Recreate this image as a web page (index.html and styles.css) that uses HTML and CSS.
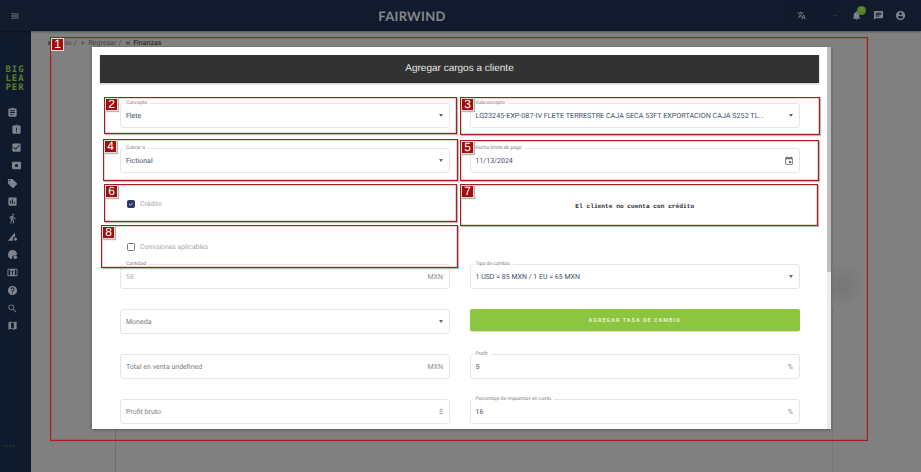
FILE: index.html
```html
<!DOCTYPE html>
<html lang="es">
<head>
<meta charset="utf-8">
<title>Fairwind</title>
<link rel="stylesheet" href="styles.css">
</head>
<body>
<svg class="sprite" aria-hidden="true">
  <symbol id="i-menu" viewBox="0 0 24 24"><path d="M3 18h18v-2H3v2zm0-5h18v-2H3v2zm0-7v2h18V6H3z"/></symbol>
  <symbol id="i-translate" viewBox="0 0 24 24"><path d="M12.87 15.07l-2.54-2.51.03-.03c1.74-1.94 2.98-4.17 3.71-6.53H17V4h-7V2H8v2H1v1.99h11.17C11.5 7.92 10.44 9.75 9 11.35 8.07 10.32 7.3 9.19 6.69 8h-2c.73 1.63 1.73 3.17 2.98 4.56l-5.09 5.02L4 19l5-5 3.11 3.11.76-2.04zM18.5 10h-2L12 22h2l1.12-3h4.75L21 22h2l-4.5-12zm-2.62 7l1.62-4.33L19.12 17h-3.24z"/></symbol>
  <symbol id="i-bell" viewBox="0 0 24 24"><path d="M12 22c1.1 0 2-.9 2-2h-4c0 1.1.89 2 2 2zm6-6v-5c0-3.07-1.64-5.64-4.5-6.32V4c0-.83-.67-1.5-1.5-1.5s-1.5.67-1.5 1.5v.68C7.63 5.36 6 7.92 6 11v5l-2 2v1h16v-1l-2-2z"/></symbol>
  <symbol id="i-chat" viewBox="0 0 24 24"><path d="M20 2H4c-1.1 0-1.99.9-1.99 2L2 22l4-4h14c1.1 0 2-.9 2-2V4c0-1.1-.9-2-2-2zM6 9h12v2H6V9zm8 5H6v-2h8v2zm4-6H6V6h12v2z"/></symbol>
  <symbol id="i-account" viewBox="0 0 24 24"><path d="M12 2C6.48 2 2 6.48 2 12s4.48 10 10 10 10-4.48 10-10S17.52 2 12 2zm0 3c1.66 0 3 1.34 3 3s-1.34 3-3 3-3-1.34-3-3 1.34-3 3-3zm0 14.2c-2.5 0-4.71-1.28-6-3.22.03-1.99 4-3.08 6-3.08 1.99 0 5.97 1.09 6 3.08-1.29 1.94-3.5 3.22-6 3.22z"/></symbol>
  <symbol id="i-event" viewBox="0 0 24 24"><path d="M17 12h-5v5h5v-5zM16 1v2H8V1H6v2H5c-1.11 0-1.99.9-1.99 2L3 19c0 1.1.89 2 2 2h14c1.1 0 2-.9 2-2V5c0-1.1-.9-2-2-2h-1V1h-2zm3 18H5V8h14v11z"/></symbol>
  <symbol id="i-assignment" viewBox="0 0 24 24"><path d="M19 3h-4.18C14.4 1.84 13.3 1 12 1c-1.3 0-2.4.84-2.82 2H5c-1.1 0-2 .9-2 2v14c0 1.1.9 2 2 2h14c1.1 0 2-.9 2-2V5c0-1.1-.9-2-2-2zm-7 0c.55 0 1 .45 1 1s-.45 1-1 1-1-.45-1-1 .45-1 1-1zm2 14H7v-2h7v2zm3-4H7v-2h10v2zm0-4H7V7h10v2z"/></symbol>
  <symbol id="i-late" viewBox="0 0 24 24"><path d="M19 3h-4.18C14.4 1.84 13.3 1 12 1c-1.3 0-2.4.84-2.82 2H5c-1.1 0-2 .9-2 2v14c0 1.1.9 2 2 2h14c1.1 0 2-.9 2-2V5c0-1.1-.9-2-2-2zm-6 15h-2v-2h2v2zm0-4h-2V8h2v6zm-1-9c-.55 0-1-.45-1-1s.45-1 1-1 1 .45 1 1-.45 1-1 1z"/></symbol>
  <symbol id="i-task" viewBox="0 0 24 24"><path d="M19 3H5c-1.11 0-2 .9-2 2v14c0 1.1.89 2 2 2h14c1.11 0 2-.9 2-2V5c0-1.1-.89-2-2-2zm-9 14l-5-5 1.41-1.41L10 14.17l7.59-7.59L19 8l-9 9z"/></symbol>
  <symbol id="i-box" viewBox="0 0 24 24"><path fill-rule="evenodd" d="M20 4H4c-1.1 0-2 .9-2 2v12c0 1.1.9 2 2 2h16c1.1 0 2-.9 2-2V6c0-1.1-.9-2-2-2zM12 15.5a3.5 3.5 0 1 1 0-7 3.5 3.5 0 0 1 0 7z"/></symbol>
  <symbol id="i-tag" viewBox="0 0 24 24"><path d="M21.41 11.58l-9-9C12.05 2.22 11.55 2 11 2H4c-1.1 0-2 .9-2 2v7c0 .55.22 1.05.59 1.42l9 9c.36.36.86.58 1.41.58.55 0 1.05-.22 1.41-.59l7-7c.37-.36.59-.86.59-1.41 0-.55-.23-1.06-.59-1.42zM5.5 7C4.67 7 4 6.33 4 5.5S4.67 4 5.5 4 7 4.67 7 5.5 6.33 7 5.5 7z"/></symbol>
  <symbol id="i-chart" viewBox="0 0 24 24"><path d="M19 3H5c-1.1 0-2 .9-2 2v14c0 1.1.9 2 2 2h14c1.1 0 2-.9 2-2V5c0-1.1-.9-2-2-2zM9 17H7v-7h2v7zm4 0h-2V7h2v10zm4 0h-2v-4h2v4z"/></symbol>
  <symbol id="i-walk" viewBox="0 0 24 24"><path d="M13.5 5.5c1.1 0 2-.9 2-2s-.9-2-2-2-2 .9-2 2 .9 2 2 2zM9.8 8.9L7 23h2.1l1.8-8 2.1 2v6h2v-7.5l-2.1-2 .6-3C14.8 12 16.8 13 19 13v-2c-1.9 0-3.5-1-4.3-2.4l-1-1.6c-.4-.6-1-1-1.7-1-.3 0-.5.1-.8.1L6 8.3V13h2V9.6l1.8-.7"/></symbol>
  <symbol id="i-ramp" viewBox="0 0 24 24"><path d="M2 21 17 3l1 9a5 5 0 0 0-5 7l.5 2z"/><circle cx="18.500" cy="17.500" r="3.500"/></symbol>
  <symbol id="i-globe" viewBox="0 0 24 24"><path d="M12 2a10 10 0 0 0-1 19.900V17l3-3h6a3 3 0 0 1 2-2A10 10 0 0 0 12 2z"/><circle cx="18" cy="18" r="4"/></symbol>
  <symbol id="i-cash" viewBox="0 0 24 24"><path fill-rule="evenodd" d="M21 4H3a2 2 0 0 0-2 2v12a2 2 0 0 0 2 2h18a2 2 0 0 0 2-2V6a2 2 0 0 0-2-2zM3 18V6h4v12H3zm18 0h-4V6h4v12zM12 7l3 4h-2v6h-2v-6H9l3-4z"/></symbol>
  <symbol id="i-help" viewBox="0 0 24 24"><path d="M12 2C6.48 2 2 6.48 2 12s4.48 10 10 10 10-4.48 10-10S17.52 2 12 2zm1 17h-2v-2h2v2zm2.07-7.750l-.9.92C13.45 12.9 13 13.5 13 15h-2v-.5c0-1.1.45-2.100 1.170-2.830l1.240-1.260c.37-.36.59-.86.59-1.410 0-1.100-.9-2-2-2s-2 .9-2 2H8c0-2.210 1.790-4 4-4s4 1.790 4 4c0 .88-.36 1.680-.93 2.250z"/></symbol>
  <symbol id="i-search" viewBox="0 0 24 24"><path d="M15.500 14h-.79l-.28-.27C15.410 12.590 16 11.110 16 9.500 16 5.910 13.090 3 9.500 3S3 5.910 3 9.500 5.910 16 9.500 16c1.610 0 3.090-.59 4.230-1.570l.27.28v.79l5 4.990L20.490 19l-4.990-5zm-6 0C7.010 14 5 11.990 5 9.500S7.010 5 9.500 5 14 7.010 14 9.500 11.990 14 9.500 14z"/></symbol>
  <symbol id="i-map" viewBox="0 0 24 24"><path d="M20.500 3l-.16.03L15 5.100 9 3 3.360 4.900c-.21.07-.36.25-.36.48V20.500c0 .28.22.5.5.5l.16-.03L9 18.900l6 2.100 5.640-1.900c.21-.07.36-.25.36-.48V3.500c0-.28-.22-.5-.5-.5zM15 19l-6-2.110V5l6 2.110V19z"/></symbol>
  <symbol id="i-home" viewBox="0 0 24 24"><path d="M10 20v-6h4v6h5v-8h3L12 3 2 12h3v8z"/></symbol>
  <symbol id="i-back" viewBox="0 0 24 24"><path d="M20 11H7.830l5.590-5.590L12 4l-8 8 8 8 1.410-1.410L7.830 13H20v-2z"/></symbol>
  <symbol id="i-money" viewBox="0 0 24 24"><path d="M5 4l14 16M19 4 5 20M3 12h18" stroke="currentColor" stroke-width="3"/></symbol>
</svg>

<div class="app">
  <header class="topbar">
    <svg class="ico ico-menu"><use href="#i-menu"/></svg>
    <div class="brand">FAIRWIND</div>
    <div class="actions">
      <div class="lang">
        <svg class="ico ico-top"><use href="#i-translate"/></svg>
        <span class="lang-caret"></span>
      </div>
      <div class="bell">
        <svg class="ico ico-top"><use href="#i-bell"/></svg>
        <span class="badge">2</span>
      </div>
      <svg class="ico ico-top"><use href="#i-chat"/></svg>
      <svg class="ico ico-top"><use href="#i-account"/></svg>
    </div>
  </header>
  <div class="layout">
    <aside class="sidebar">
      <div class="logo">BIG<br>LEA<br>PER</div>
      <nav class="nav">
        <svg class="ico"><use href="#i-assignment"/></svg>
        <svg class="ico sub"><use href="#i-late"/></svg>
        <svg class="ico sub"><use href="#i-task"/></svg>
        <svg class="ico sub"><use href="#i-box"/></svg>
        <svg class="ico"><use href="#i-tag"/></svg>
        <svg class="ico"><use href="#i-chart"/></svg>
        <svg class="ico"><use href="#i-walk"/></svg>
        <svg class="ico"><use href="#i-ramp"/></svg>
        <svg class="ico"><use href="#i-globe"/></svg>
        <svg class="ico"><use href="#i-cash"/></svg>
        <svg class="ico"><use href="#i-help"/></svg>
        <svg class="ico"><use href="#i-search"/></svg>
        <svg class="ico"><use href="#i-map"/></svg>
      </nav>
      <div class="version">v 1.0.0</div>
    </aside>
    <main class="main">
      <div class="crumbs">
        <svg class="ico-crumb"><use href="#i-home"/></svg><span>Inicio</span><span>/</span>
        <svg class="ico-crumb"><use href="#i-back"/></svg><span>Regresar</span><span>/</span>
        <svg class="ico-crumb"><use href="#i-money"/></svg><span class="crumb-on">Finanzas</span>
      </div>
      <div class="page-panel"></div>
    </main>
  </div>
</div>

<div class="backdrop-glow"></div>

<section class="modal">
  <div class="modal-scroll">
    <h1 class="modal-title">Agregar cargos a cliente</h1>
    <form class="form">
      <div class="field"><span class="legend">Concepto</span><span class="value">Flete</span><span class="caret"></span></div>
      <div class="field"><span class="legend">Subconcepto</span><span class="value long">LG23245-EXP-087-IV FLETE TERRESTRE CAJA SECA 53FT EXPORTACION CAJA S252 TL...</span><span class="caret"></span></div>

      <div class="field"><span class="legend">Cobrar a</span><span class="value">Fictional</span><span class="caret"></span></div>
      <div class="field"><span class="legend">Fecha límite de pago</span><span class="value">11/13/2024</span><svg class="ico ico-date"><use href="#i-event"/></svg></div>

      <label class="check check-first"><span class="box box-on"><svg viewBox="0 0 24 24"><path d="M5 12.500l4.500 4.500L19 7.500" fill="none" stroke="#fff" stroke-width="3"/></svg></span>Crédito</label>
      <div class="notice">El cliente no cuenta con crédito</div>

      <label class="check check-second"><span class="box"></span>Comisiones aplicables</label>
      <div class="spacer"></div>

      <div class="field"><span class="legend">Cantidad</span><span class="value muted">58</span><span class="unit">MXN</span></div>
      <div class="field"><span class="legend">Tipo de cambio</span><span class="value">1 USD = 85 MXN / 1 EU = 65 MXN</span><span class="caret"></span></div>

      <div class="field"><span class="value hint">Moneda</span><span class="caret"></span></div>
      <button class="add-rate" type="button">AGREGAR TASA DE CAMBIO</button>

      <div class="field"><span class="value hint">Total en venta undefined</span><span class="unit">MXN</span></div>
      <div class="field"><span class="legend">Profit</span><span class="value">5</span><span class="unit">%</span></div>

      <div class="field"><span class="value hint">Profit bruto</span><span class="unit">$</span></div>
      <div class="field"><span class="legend">Porcentaje de impuestos en costo</span><span class="value">16</span><span class="unit">%</span></div>
    </form>
  </div>
  <div class="scrollbar"><div class="thumb"></div></div>
</section>

<div class="mark mark-1"><b>1</b></div>
<div class="mark mark-2"><b>2</b></div>
<div class="mark mark-3"><b>3</b></div>
<div class="mark mark-4"><b>4</b></div>
<div class="mark mark-5"><b>5</b></div>
<div class="mark mark-6"><b>6</b></div>
<div class="mark mark-7"><b>7</b></div>
<div class="mark mark-8"><b>8</b></div>
</body>
</html>
```
FILE: styles.css
```css
* { box-sizing: border-box; margin: 0; padding: 0; }
html, body { width: 921px; height: 472px; overflow: hidden; }
body { font-family: Roboto, "Liberation Sans", sans-serif; background: #808080; position: relative; text-rendering: geometricPrecision; }
.sprite { display: none; }
.ico { width: 11px; height: 11px; fill: #7e838d; display: block; }

.app { display: flex; flex-direction: column; height: 472px; }
.topbar { height: 31px; flex: none; background: #121b2e; display: flex; align-items: center; position: relative; padding-left: 10px; box-shadow: 0 1px 2px rgba(0,0,0,.35); z-index: 1; }
.ico-menu { width: 10px; height: 10px; }
.brand { flex: 1; text-align: center; font-family: Lato, sans-serif; font-weight: 700; font-size: 13px; letter-spacing: .3px; color: #85888e; padding-left: 15px; }
.actions { display: flex; align-items: center; gap: 11px; padding-right: 15px; }
.ico-top { width: 11px; height: 11px; }
.lang { display: flex; align-items: center; gap: 27px; width: 48px; height: 30px; padding-left: 8px; background: #111a2c; margin-right: 3px; }
.lang-caret { width: 0; height: 0; border: 2px solid transparent; border-top-color: #2a3244; border-bottom: 0; }
.bell { position: relative; }
.badge { position: absolute; left: 6px; top: -4px; width: 9px; height: 9px; border-radius: 50%; background: #568127; color: #87a566; font-size: 5px; line-height: 9px; text-align: center; }

.layout { flex: 1; display: flex; min-height: 0; }
.sidebar { width: 31px; flex: none; background: #0f1a2c; position: relative; display: flex; flex-direction: column; padding-top: 35px; }
.logo { font-family: "DejaVu Sans Mono", monospace; font-size: 9px; line-height: 9px; letter-spacing: .9px; color: #5c7f2a; font-weight: 700; padding-left: 5.500px; }
.nav { display: flex; flex-direction: column; gap: 6.830px; padding: 13.500px 0 0 7px; }
.nav .sub { margin-left: 4px; }
.version { margin-top: auto; margin-bottom: 24px; padding-left: 3px; font-size: 3px; line-height: 4px; letter-spacing: .5px; color: #4d6b25; }

.main { flex: 1; display: flex; flex-direction: column; min-width: 0; }
.crumbs { display: flex; align-items: center; gap: 2.200px; height: 12px; margin: 6px 0 0 14px; font-size: 7px; color: #444; }
.ico-crumb { width: 6px; height: 6px; fill: #3d3d3d; color: #3d3d3d; margin-left: 1.500px; }
.crumb-on { color: #2f2f2f; font-weight: 500; }
.page-panel { flex: 1; margin: 0 88px 0 84px; border-left: 1px solid #6e6e6e; border-right: 1px solid #787878; }

.backdrop-glow { position: absolute; left: 820px; top: 262px; width: 44px; height: 46px; background: radial-gradient(closest-side, #767676, #808080); }

.modal { position: absolute; left: 92px; top: 47px; width: 739px; height: 382px; background: #fff; box-shadow: 0 1px 3px rgba(0,0,0,.3); display: flex; overflow: hidden; }
.modal-scroll { flex: 1; min-width: 0; padding: 8px 8px 0; }
.scrollbar { width: 4px; flex: none; background: #ececec; }
.thumb { height: 225px; background: #bdbdbd; }
.modal-title { height: 28px; background: #323232; color: #e6e6e6; font-size: 10px; font-weight: 400; line-height: 28px; text-align: center; font-family: "Liberation Sans", sans-serif; box-shadow: 0 1px 2px rgba(0,0,0,.25); }

.form { display: grid; grid-template-columns: 330px 330.500px; column-gap: 19.500px; margin: 20px 0 0 20px; }
.field { height: 25px; border: 1px solid #e6e6e6; border-radius: 3px; position: relative; display: flex; align-items: center; padding: 0 5px; margin-bottom: 20px; }
.legend { position: absolute; left: 2px; top: -4.500px; padding: 0 3px; background: #fff; font-size: 5px; line-height: 6px; color: #7f7f7f; white-space: nowrap; }
.value { flex: 1; min-width: 0; font-size: 7px; color: #46506a; white-space: nowrap; }
.long { font-size: 7.200px; }
.muted { color: #b0b0b0; }
.hint { color: #7d7d7d; }
.unit { font-size: 7px; color: #8c8c8c; margin-right: 1px; }
.caret { width: 0; height: 0; border: 2.500px solid transparent; border-top: 3px solid #666; border-bottom: 0; margin-right: 1px; }
.ico-date { width: 10px; height: 10px; fill: #666; margin-right: 0; }

.check { display: flex; align-items: center; gap: 5px; height: 20px; padding: 1px 0 0 7px; font-size: 6.800px; color: #a8a8a8; }
.check-first { margin-bottom: 23px; }
.check-second { margin-bottom: 8px; }
.box { width: 8px; height: 8px; border: 1px solid #777; border-radius: 1.500px; display: block; }
.box-on { background: #2a3a63; border-color: #2a3a63; }
.box-on svg { display: block; width: 6px; height: 6px; }
.notice { height: 20px; display: flex; align-items: center; justify-content: center; padding-top: 7px; font-family: "Liberation Mono", monospace; font-weight: 700; font-size: 6.200px; color: #2a2a2a; }
.spacer { height: 20px; }

.add-rate { height: 22px; margin-bottom: 23px; border: 0; border-radius: 2px; background: #8cc63f; color: #e4f2cf; font-family: Roboto, sans-serif; font-size: 5.500px; font-weight: 700; letter-spacing: 1px; box-shadow: 0 1px 1px rgba(0,0,0,.15); }

.mark { position: absolute; border: 1px solid #a61e1e; box-shadow: 1px 1px 1px rgba(120,120,120,.5), inset 0 0 0 .5px rgba(166,30,30,.4); }
.mark b { position: absolute; left: 0; top: 0; width: 13px; height: 13px; border: 1px solid #e2dcdc; background: #a30d0d; color: #fff; font: 400 12px/11px "Liberation Sans", sans-serif; text-align: center; box-shadow: 1px 1px 1px rgba(130,130,130,.6); }
.mark-1 { left: 50px; top: 37px; width: 818px; height: 404px; }
.mark-2 { left: 104px; top: 97px; width: 353px; height: 37px; }
.mark-3 { left: 460px; top: 97px; width: 360px; height: 38px; }
.mark-4 { left: 103px; top: 139px; width: 355px; height: 42px; }
.mark-5 { left: 460px; top: 140px; width: 359px; height: 41px; }
.mark-6 { left: 104px; top: 184px; width: 353px; height: 38px; }
.mark-7 { left: 460px; top: 184px; width: 358px; height: 42px; }
.mark-8 { left: 101px; top: 225px; width: 357px; height: 43px; }
```
